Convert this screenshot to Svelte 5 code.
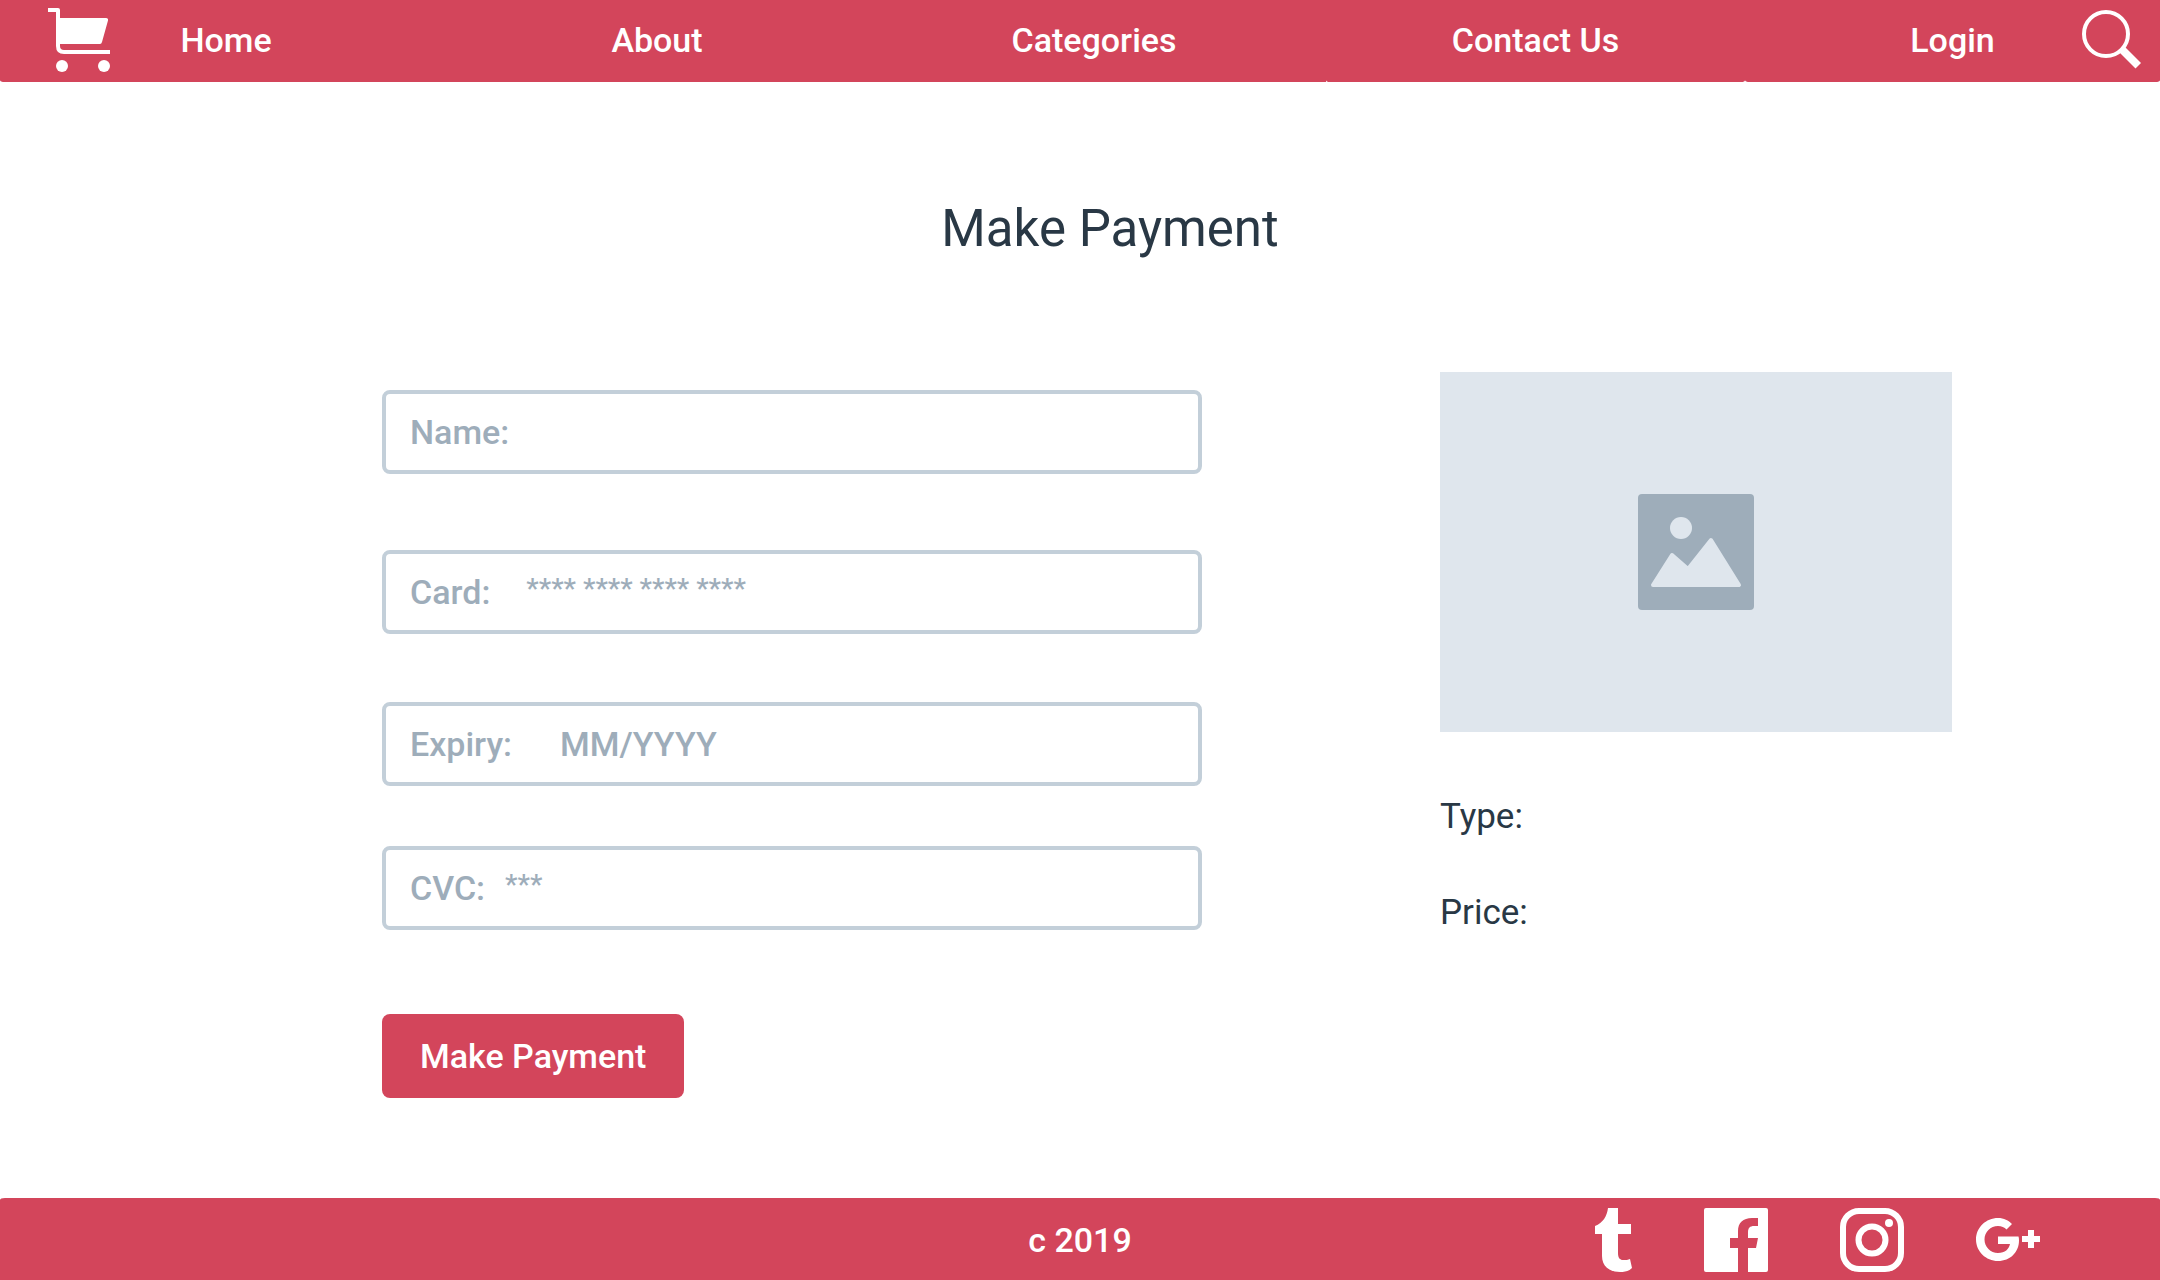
<script>
  const links = ['Home', 'About', 'Categories', 'Contact Us', 'Login'];
  const fields = [
    { id: 'name', label: 'Name:', hint: '', masked: false },
    { id: 'card', label: 'Card:', hint: '**** **** **** ****', masked: true },
    { id: 'expiry', label: 'Expiry:', hint: 'MM/YYYY', masked: false },
    { id: 'cvc', label: 'CVC:', hint: '***', masked: true }
  ];
</script>

<div class="page">
  <header class="top">
    <nav>
      {#each links as link}
        <a href="#{link}">{link}</a>
      {/each}
    </nav>
    <a class="cart" href="#cart" aria-label="Cart">
      <svg viewBox="0 0 62 64" width="62" height="64">
        <path d="M0 0H10Q12 0 12 2V10H58Q60.500 10 60 12.500L54 34Q53.500 36 52 36H12V38Q12 42 16 42H62V46H16Q8 46 8 38V4H0Z" />
        <circle cx="14" cy="58" r="6" /><circle cx="56" cy="58" r="6" />
      </svg>
    </a>
    <button class="search" aria-label="Search">
      <svg viewBox="0 0 60 60" width="60" height="60">
        <circle class="line" cx="25" cy="24" r="22" stroke-width="4" />
        <path d="M44 37L60 53L54.500 58.500L38 42Z" />
      </svg>
    </button>
  </header>

  <main>
    <h1>Make Payment</h1>
    <div class="columns">
      <form onsubmit={(e) => e.preventDefault()}>
        {#each fields as field}
          <div class="field {field.id}">
            <label for={field.id}>{field.label}</label>
            <input id={field.id} type="text" class:masked={field.masked} placeholder={field.hint} />
          </div>
        {/each}
        <button class="pay" type="submit">Make Payment</button>
      </form>
      <aside>
        <div class="picture">
          <svg viewBox="0 0 116 116" width="116" height="116" role="img" aria-label="Product">
            <rect width="116" height="116" rx="4" fill="#9eadba" />
            <circle cx="43" cy="34" r="11" />
            <path d="M15 91L34 61L50 75L73 46L101 91Z" stroke="#dfe6ed" stroke-width="4" stroke-linejoin="round" />
          </svg>
        </div>
        <p>Type:</p>
        <p>Price:</p>
      </aside>
    </div>
  </main>

  <footer class="bottom">
    <span class="copy">c 2019</span>
    <div class="social">
      <a href="#tumblr" aria-label="Tumblr">
        <svg viewBox="0 0 37 64" width="37" height="64">
          <path d="M13 0H23V16H36V26H23V45C23 50 25 52 28 52C31 52 33 52 35 51L37 60C34 63 30 64 25 64C14 64 7 58 7 48V26H0V18C8 15 12 8 13 0Z" />
        </svg>
      </a>
      <a href="#facebook" aria-label="Facebook">
        <svg viewBox="0 0 64 64" width="64" height="64">
          <path d="M2 0H62Q64 0 64 2V62Q64 64 62 64H44V40H52L54 30H44V24C44 20 46 18 50 18H54V10H48C39 10 34 15 34 23V30H26V40H34V64H2Q0 64 0 62V2Q0 0 2 0Z" />
        </svg>
      </a>
      <a href="#instagram" aria-label="Instagram">
        <svg viewBox="0 0 64 64" width="64" height="64">
          <rect class="line" x="3" y="3" width="58" height="58" rx="16" stroke-width="6" />
          <circle class="line" cx="32" cy="32" r="13.500" stroke-width="6" />
          <circle cx="49" cy="15" r="4" />
        </svg>
      </a>
      <a href="#google-plus" aria-label="Google Plus">
        <svg viewBox="0 0 64 44" width="64" height="44">
          <path d="M22 18.500V26H34C33 31 29 35 22 35C14.500 35 8.500 29 8.500 21.500S14.500 8 22 8C25.500 8 28.500 9.500 30.500 11.500L36 6C32.500 2.500 28 0 22 0C10 0 0 9.500 0 21.500S10 43 22 43C34.500 43 43 34 43 22.500Q43 20 42.500 18.500Z" />
          <path d="M52 12H58V18H64V24H58V30H52V24H46V18H52Z" />
        </svg>
      </a>
    </div>
  </footer>
</div>

<style>
  :global(body) { margin: 0; background: #fff; }
  .page {
    min-height: 100vh;
    display: flex;
    flex-direction: column;
    font: 500 34px/42px Roboto, sans-serif;
    color: #293845;
  }
  svg { display: block; fill: #fff; }
  .line { fill: none; stroke: #fff; }
  a { color: #fff; text-decoration: none; }
  button { border: 0; font: inherit; color: #fff; cursor: pointer; }

  .top { display: grid; align-items: center; }
  .top > * { grid-area: 1 / 1; }
  nav { display: grid; grid-template-columns: 452fr 410fr 464fr 419fr 415fr; }
  nav a {
    display: flex;
    align-items: center;
    justify-content: center;
    height: 82px;
    box-sizing: border-box;
    padding-bottom: 2px;
    background: #d3455b;
  }
  nav a:first-child { border-bottom-left-radius: 5px 2px; }
  nav a:nth-child(4) { border-radius: 0 0 4px 4px / 0 0 2px 2px; }
  nav a:last-child { border-radius: 0 0 5px 5px / 0 0 2px 2px; }
  .cart { justify-self: start; padding: 0 0 2px 48px; }
  .search { justify-self: end; padding: 0 19px 2px 0; background: none; }

  main { flex: 1; }
  h1 { margin: 115px 0 0; padding-left: 60px; text-align: center; font-size: 51px; line-height: 64px; font-weight: 400; }
  .columns { display: grid; grid-template-columns: 820fr 512fr; gap: 238px; padding: 111px 208px 0 382px; }
  form { display: flex; flex-direction: column; padding-top: 18px; }
  .field {
    display: flex;
    align-items: center;
    height: 84px;
    box-sizing: border-box;
    border: 4px solid #c3cfd9;
    border-radius: 8px;
    padding: 0 24px;
    color: #9eadba;
  }
  .name { margin-bottom: 76px; }
  .card { margin-bottom: 68px; gap: 36px; }
  .expiry { margin-bottom: 60px; gap: 48px; }
  .cvc { margin-bottom: 84px; gap: 20px; }
  input { flex: 1; min-width: 0; padding: 0; border: 0; outline: 0; background: none; font: inherit; color: inherit; }
  input::placeholder { color: #9eadba; opacity: 1; }
  .masked { font-size: 28px; padding-bottom: 6px; }
  .pay { align-self: flex-start; height: 84px; padding: 0 38px; border-radius: 8px; background: #d3455b; }
  .picture { aspect-ratio: 512 / 360; background: #dfe6ed; display: grid; place-items: center; margin-bottom: 64px; }
  .picture svg { fill: #dfe6ed; }
  aside p { margin: 0 0 54px; font-weight: 400; font-size: 35px; }

  .bottom {
    height: 82px;
    box-sizing: border-box;
    padding-top: 2px;
    background: #d3455b;
    color: #fff;
    border-radius: 5px 5px 0 0 / 2px 2px 0 0;
    display: grid;
    grid-template-columns: 1fr auto 1fr;
    align-items: center;
  }
  .copy { grid-column: 2; }
  .social { display: flex; align-items: center; justify-content: flex-end; gap: 72px; padding-right: 120px; }
</style>
